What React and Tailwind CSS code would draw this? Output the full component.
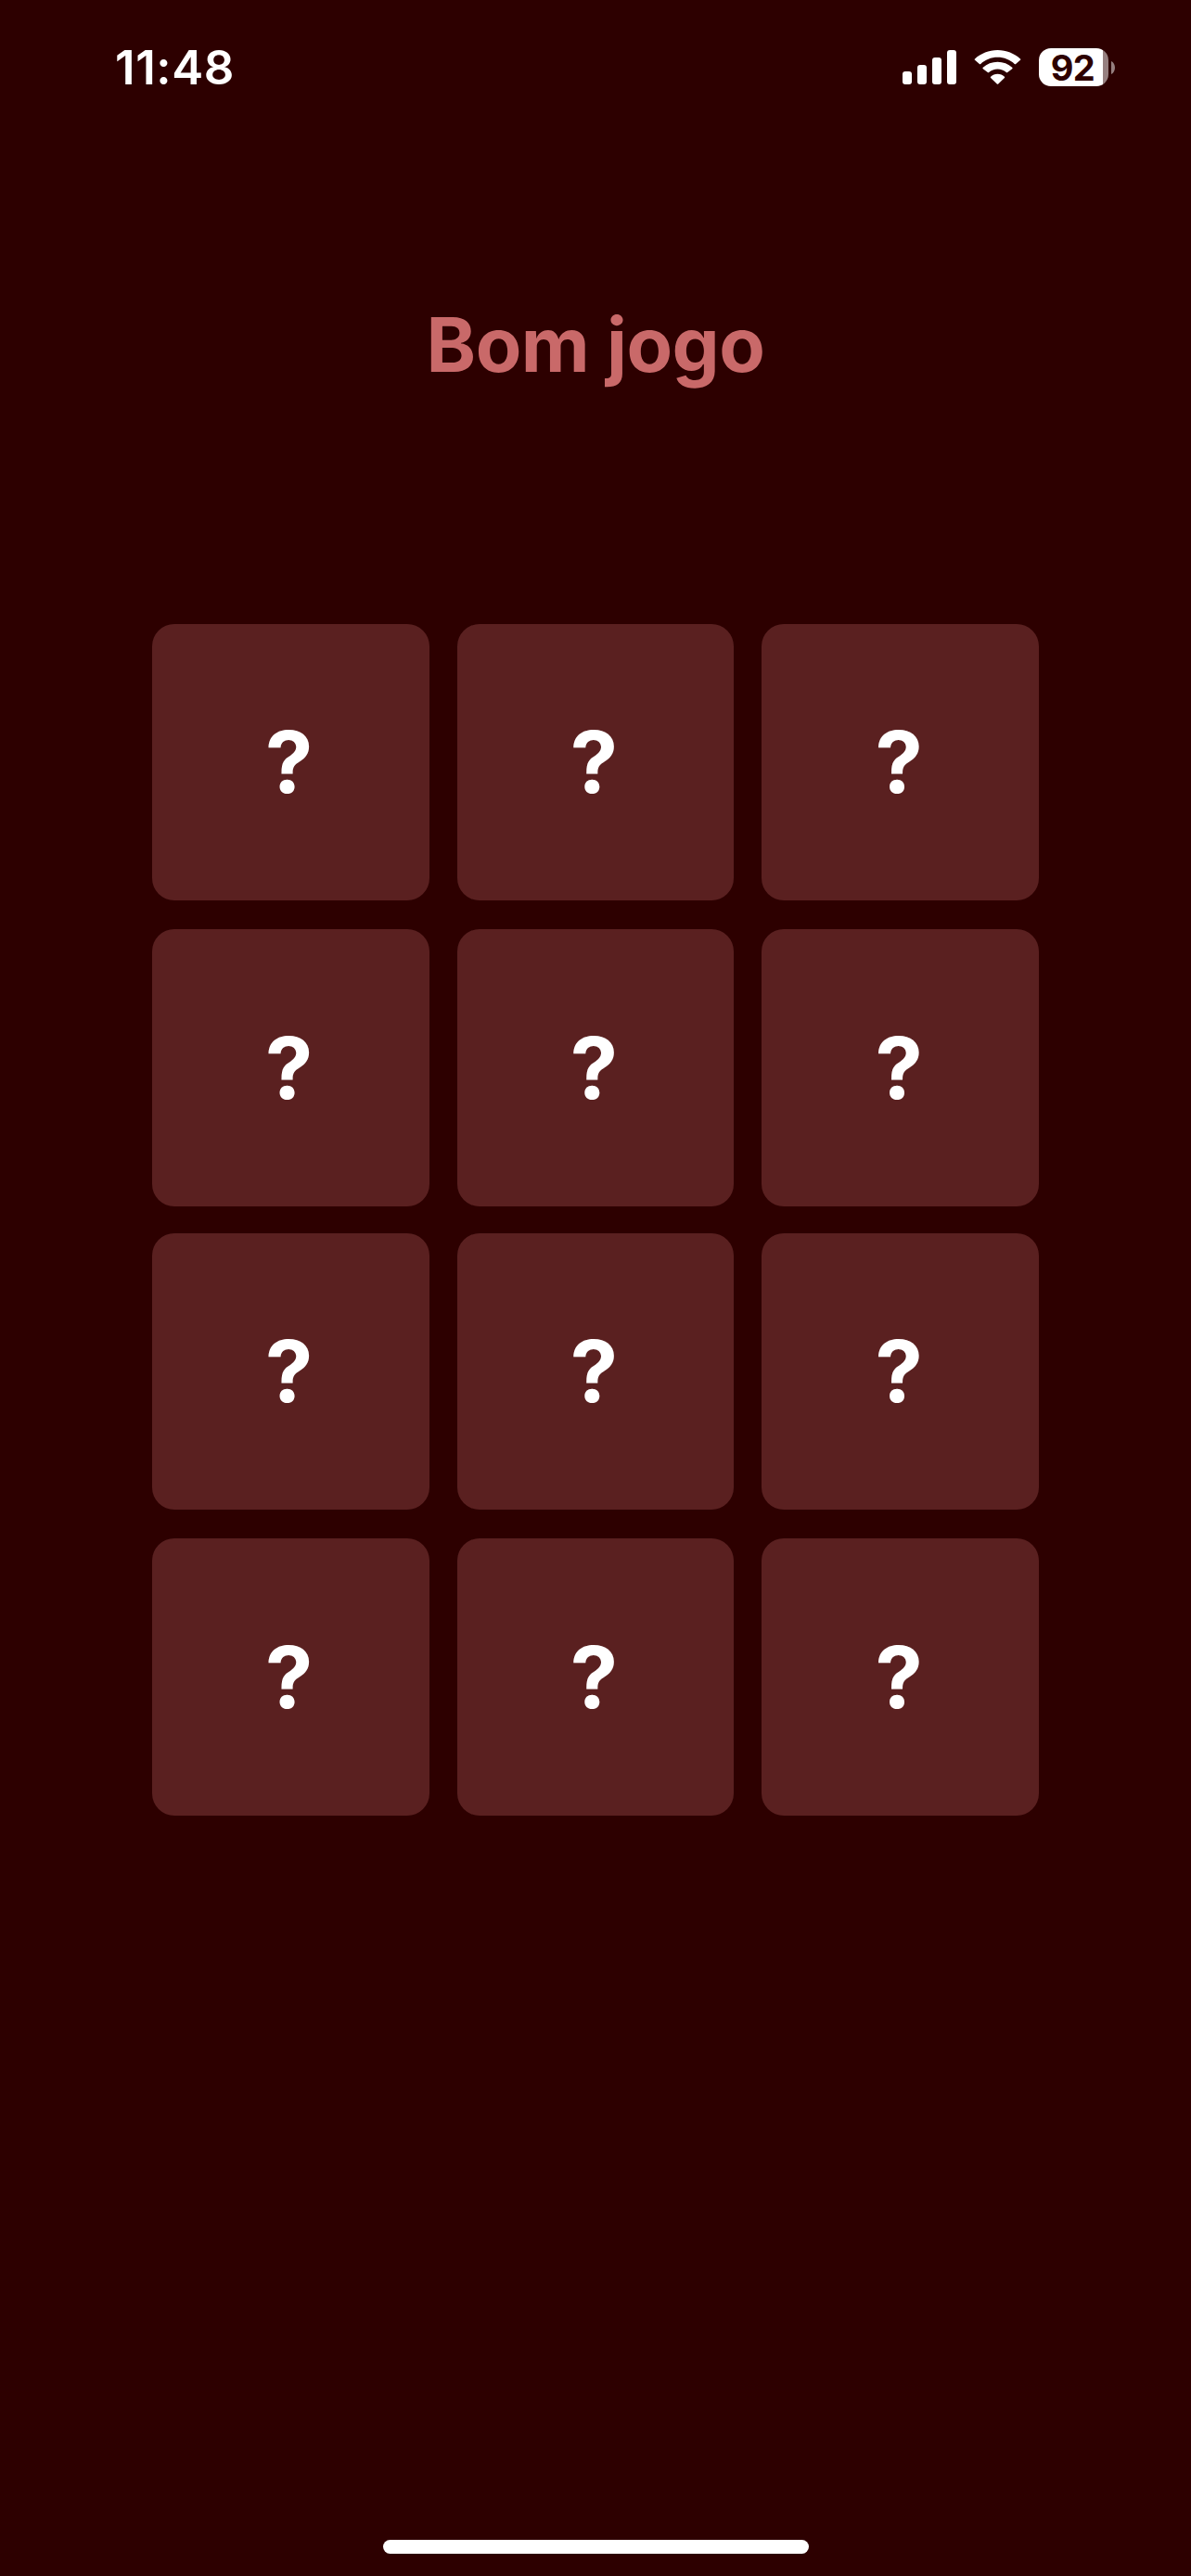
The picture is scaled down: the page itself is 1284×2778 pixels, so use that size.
import React from "react";

const rows = [
  "h-[298px] mb-[31px]",
  "h-[299px] mb-[29px]",
  "h-[298px] mb-[31px]",
  "h-[299px]",
];

function Signal() {
  return (
    <svg className="mr-[19px]" width="58" height="38" viewBox="0 0 58 38" fill="#fff">
      <rect x="0" y="23" width="10" height="14" rx="3" />
      <rect x="16" y="16" width="10" height="21" rx="3" />
      <rect x="32" y="8" width="10" height="29" rx="3" />
      <rect x="48" y="0" width="10" height="37" rx="3" />
    </svg>
  );
}

function Wifi() {
  return (
    <svg className="mr-[19px]" width="51" height="38" viewBox="0 0 50 38" preserveAspectRatio="none" fill="#fff">
      <path d="M25 7.8c6.9 0 13.2 2.7 17.9 7.2.4.3.9.3 1.3 0l4.8-4.2c.5-.4.5-1 0-1.4C42.7 3.6 34.3 0 25 0S7.3 3.6 1 9.4c-.5.4-.5 1 0 1.4L5.8 15c.4.3.9.3 1.3 0C11.8 10.5 18.1 7.8 25 7.8z" />
      <path d="M25 20.6c3.5 0 6.7 1.3 9.2 3.4.4.4.9.4 1.3 0l4.9-3.8c.5-.4.5-1 0-1.4C36.3 15 30.9 12.8 25 12.8S13.7 15 9.6 18.8c-.5.4-.5 1 0 1.4l4.9 3.8c.4.4.9.4 1.3 0 2.5-2.1 5.7-3.4 9.2-3.4z" />
      <path d="M32.3 28.7c.4.4.4.9 0 1.3l-6.6 6.5c-.4.4-1 .4-1.4 0L17.7 30c-.4-.4-.4-.9 0-1.3 1.9-1.8 4.5-2.9 7.3-2.9s5.4 1.1 7.3 2.9z" />
    </svg>
  );
}

function Battery() {
  return (
    <div className="flex items-center">
      <div className="flex h-[41px] w-[75px] items-center justify-center rounded-[13px] bg-[linear-gradient(90deg,#fff_69px,#968080_69px)] text-[38px] font-bold leading-none tracking-[-0.5px] text-[#2d0000]">
        <span className="relative -left-[1px]">92</span>
      </div>
      <svg className="ml-[3px]" width="4" height="14" viewBox="0 0 4 14" fill="#968080">
        <path d="M0 0c2.4 1 4 3.7 4 7s-1.6 6-4 7z" />
      </svg>
    </div>
  );
}

export default function App() {
  return (
    <div className="flex h-[2778px] w-[1284px] flex-col bg-[#2d0000] font-[Inter,sans-serif] text-white">
      <header className="flex h-[144px] items-start justify-between pl-[124px] pr-[82px]">
        <div className="mt-[48px] text-[51px] font-semibold leading-[50px] tracking-[0.6px]">11:48</div>
        <div className="mt-[52px] flex h-[41px] items-center">
          <Signal />
          <Wifi />
          <Battery />
        </div>
      </header>
      <h1 className="mt-[178px] h-[100px] text-center text-[81px] font-bold leading-[100px] tracking-[-0.5px] text-[#c96969]">
        Bom jogo
      </h1>
      <main className="mt-[251px] pl-[164px]">
        {rows.map((row, i) => (
          <div key={i} className={"flex " + row}>
            {[0, 1, 2].map((c) => (
              <button
                key={c}
                className="mr-[30px] flex w-[298.67px] shrink-0 items-center justify-center rounded-[24px] bg-[#5a2020] pr-[3px] text-[92px] font-bold leading-[94px]"
              >
                ?
              </button>
            ))}
          </div>
        ))}
      </main>
      <div className="mx-auto mb-[24px] mt-auto h-[15px] w-[459px] rounded-full bg-white" />
    </div>
  );
}
